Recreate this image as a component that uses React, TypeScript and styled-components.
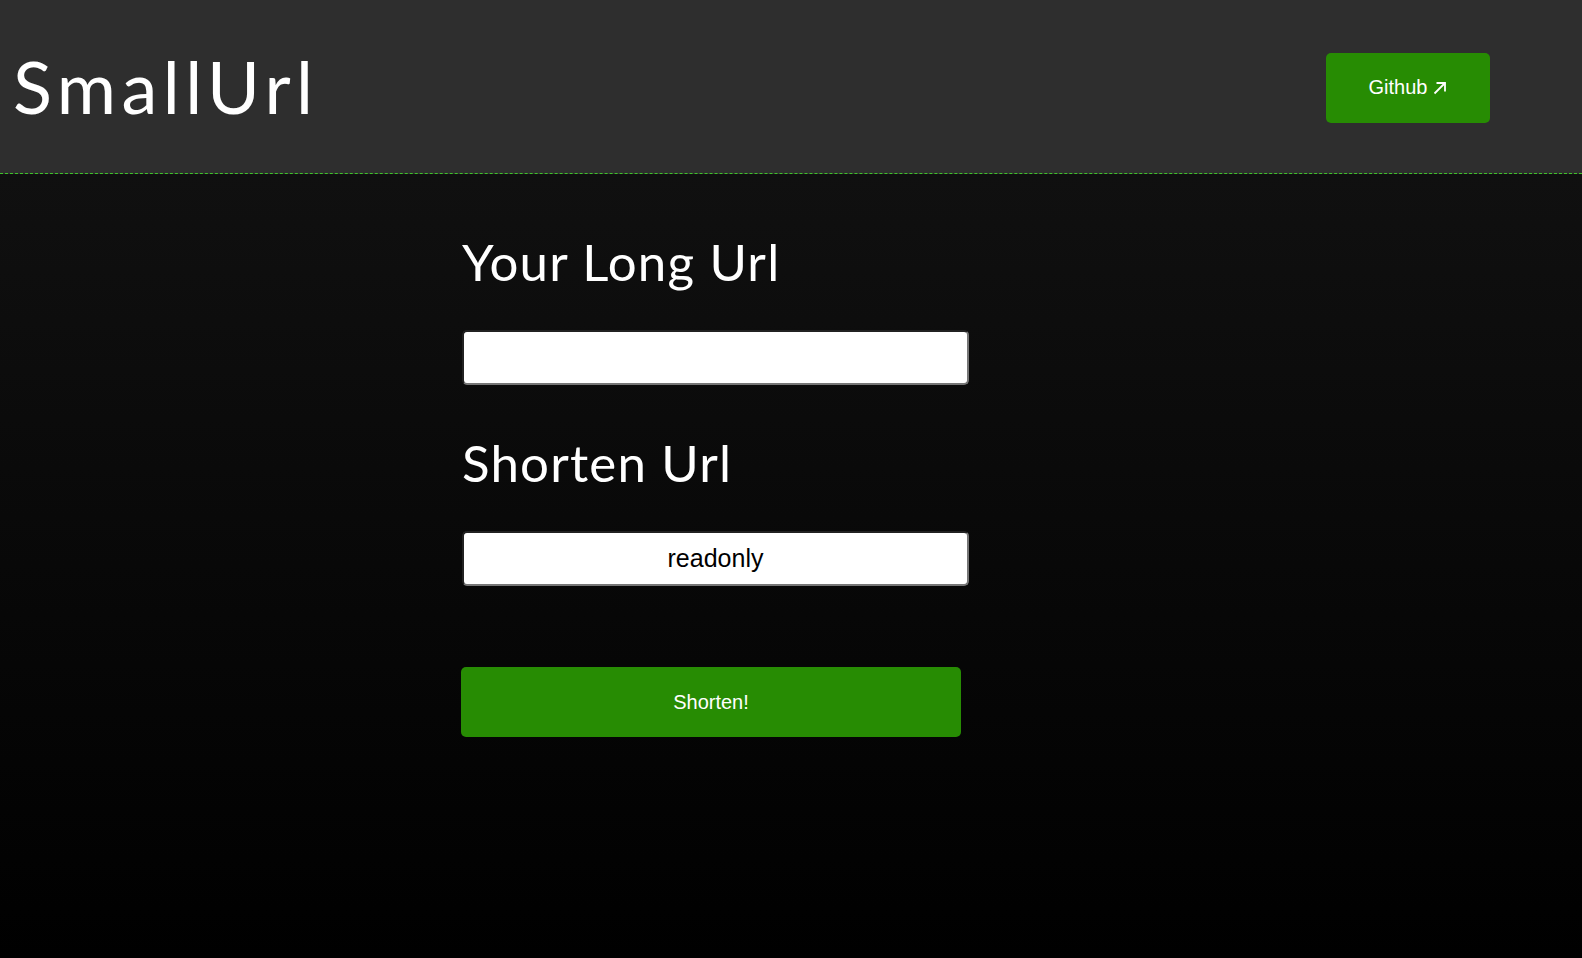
import styled, { createGlobalStyle } from "styled-components";

const GlobalStyle = createGlobalStyle`
  html, body {
    margin: 0;
    padding: 0;
    height: 100%;
  }
  body {
    background: #000;
    font-family: "Liberation Sans", Arial, sans-serif;
  }
  #root {
    min-height: 100vh;
    display: flex;
    flex-direction: column;
  }
`;

const Header = styled.header`
  display: flex;
  justify-content: space-between;
  align-items: center;
  height: 174px;
  box-sizing: border-box;
  padding: 0 92px 0 13px;
  background-color: #2e2e2e;
  border-bottom: 1px dashed #3fc32a;
`;

const Logo = styled.h1`
  margin: 0;
  padding-bottom: 2px;
  color: white;
  font-family: Lato, "Open Sans", sans-serif;
  font-weight: 400;
  font-size: 72px;
  letter-spacing: 5.5px;
`;

const GithubLink = styled.a`
  display: flex;
  align-items: center;
  justify-content: center;
  gap: 6px;
  width: 164px;
  height: 70px;
  margin-top: 2px;
  border-radius: 5px;
  background-color: #278c03;
  color: white;
  font-size: 20px;
  text-decoration: none;
`;

const Main = styled.main`
  flex: 1;
  display: flex;
  justify-content: center;
  background: linear-gradient(to bottom, #101010, #000 100%);
`;

const Form = styled.form`
  width: 660px;
  display: flex;
  flex-direction: column;
  align-items: flex-start;
  padding-top: 57px;
`;

const Label = styled.label`
  color: white;
  font-family: Lato, "Open Sans", sans-serif;
  font-weight: 400;
  font-size: 51px;
  letter-spacing: 1.2px;
  line-height: 1.2;
  margin-left: 1px;
`;

const Input = styled.input<{ $last?: boolean }>`
  box-sizing: border-box;
  width: 507px;
  height: 55px;
  margin: 38px 0 ${(p) => (p.$last ? "0" : "47px")} 1px;
  border: 2px inset #767676;
  border-radius: 5px;
  background: white;
  color: black;
  text-align: center;
  font-family: "Liberation Sans", Arial, sans-serif;
  font-size: 25px;
  outline: none;
`;

const Button = styled.button`
  width: 500px;
  height: 70px;
  margin-top: 81px;
  border: none;
  border-radius: 5px;
  background-color: #278c03;
  color: white;
  font-family: "Liberation Sans", Arial, sans-serif;
  font-size: 20px;
  cursor: pointer;
`;

function ArrowIcon() {
  return (
    <svg width="14" height="14" viewBox="0 0 14 14" fill="none" stroke="white" strokeWidth="1.8">
      <path d="M1.5 12.5 L12 2" />
      <path d="M3.5 2 H12 V10.5" />
    </svg>
  );
}

export default function App() {
  return (
    <>
      <GlobalStyle />
      <Header>
        <Logo>SmallUrl</Logo>
        <GithubLink href="#">
          Github <ArrowIcon />
        </GithubLink>
      </Header>
      <Main>
        <Form onSubmit={(e) => e.preventDefault()}>
          <Label>Your Long Url</Label>
          <Input type="text" />
          <Label>Shorten Url</Label>
          <Input type="text" readOnly value="readonly" $last />
          <Button type="submit">Shorten!</Button>
        </Form>
      </Main>
    </>
  );
}
